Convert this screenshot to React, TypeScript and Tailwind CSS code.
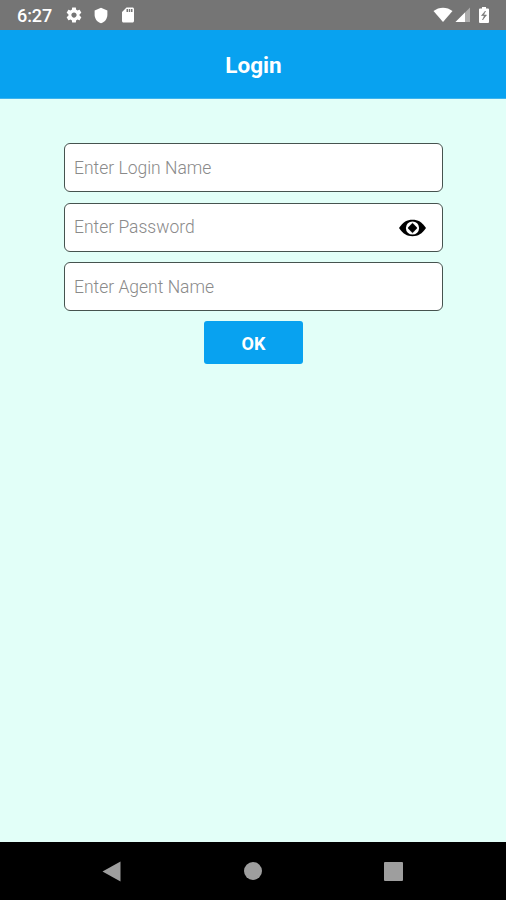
import type { ReactNode } from 'react';

function StatusBar() {
  return (
    <div className="flex h-[30px] shrink-0 items-center bg-[#757575] pl-[17px] pr-[16px] text-white">
      <span className="w-[48px] pt-[2px] text-[18px] font-medium leading-[28px] tracking-[-0.1px]">6:27</span>
      <svg className="h-[18px] w-[18px]" viewBox="0 0 24 24" fill="currentColor">
        <path d="M19.43 12.98c.04-.32.07-.64.07-.98s-.03-.66-.07-.98l2.11-1.65c.19-.15.24-.42.12-.64l-2-3.46c-.12-.22-.39-.3-.61-.22l-2.49 1c-.52-.4-1.08-.73-1.69-.98l-.38-2.65C14.46 2.18 14.25 2 14 2h-4c-.25 0-.46.18-.49.42l-.38 2.65c-.61.25-1.17.59-1.69.98l-2.49-1c-.23-.09-.49 0-.61.22l-2 3.46c-.13.22-.07.49.12.64l2.11 1.65c-.04.32-.07.65-.07.98s.03.66.07.98l-2.11 1.65c-.19.15-.24.42-.12.64l2 3.46c.12.22.39.3.61.22l2.49-1c.52.4 1.08.73 1.69.98l.38 2.65c.03.24.24.42.49.42h4c.25 0 .46-.18.49-.42l.38-2.65c.61-.25 1.17-.59 1.69-.98l2.49 1c.23.09.49 0 .61-.22l2-3.46c.12-.22.07-.49-.12-.64l-2.11-1.65zM12 15.500c-1.930 0-3.500-1.570-3.500-3.500s1.570-3.500 3.500-3.500 3.500 1.570 3.500 3.500-1.570 3.500-3.500 3.500z" />
      </svg>
      <svg className="ml-[9px] h-[17px] w-[18px]" viewBox="0 0 24 24" fill="currentColor">
        <path d="M12 1 3 5v6c0 5.55 3.84 10.74 9 12 5.16-1.26 9-6.45 9-12V5l-9-4z" />
      </svg>
      <svg className="ml-[9px] h-[18px] w-[18px]" viewBox="0 0 24 24" fill="currentColor">
        <path d="M18 2h-8L4.02 8 4 20c0 1.100.9 2 2 2h12c1.100 0 2-.9 2-2V4c0-1.100-.9-2-2-2zm-6 6h-2V4h2v4zm3 0h-2V4h2v4zm3 0h-2V4h2v4z" />
      </svg>
      <svg className="ml-auto h-[16px] w-[20px]" viewBox="0 0 20 16" fill="currentColor">
        <path d="M.5 4C6-.5 14-.5 19.500 4L10 15z" />
      </svg>
      <svg className="ml-[2px] h-[16px] w-[15px]" viewBox="0 0 15 16" fill="currentColor">
        <path d="M15 .5V15H.5z" opacity=".4" />
        <path d="M10 5.500V15H.5z" />
      </svg>
      <svg className="ml-[8px] h-[18px] w-[12px]" viewBox="0 0 12 18">
        <path d="M4 1h4v1.500h2a1 1 0 0 1 1 1V16a1 1 0 0 1-1 1H2a1 1 0 0 1-1-1V3.500a1 1 0 0 1 1-1h2z" fill="white" />
        <path d="M7.500 5 3.500 9.500h3L4.500 14 8.500 9h-3z" fill="#757575" stroke="#757575" strokeWidth=".6" />
      </svg>
    </div>
  );
}

function Field({ label, children }: { label: string; children?: ReactNode }) {
  return (
    <div className="flex h-[49px] w-full items-center rounded-[6px] border border-[#46534f] bg-white pl-[9px] pr-[16px] text-[17.5px] font-light text-[#8a8a8a]">
      <span className="flex-1 pt-[1px]">{label}</span>
      {children}
    </div>
  );
}

function EyeIcon() {
  return (
    <svg className="mt-[1px] h-[18px] w-[27px] shrink-0" viewBox="0 0 27 18">
      <path d="M0 9C4 3 8 .8 13.500.8S23 3 27 9C23 15 19 17.200 13.500 17.200S4 15 0 9z" fill="black" />
      <circle cx="13.500" cy="9" r="6.600" fill="white" />
      <path d="M13.500 4.300Q16 6.500 18 9Q16 11.500 13.500 13.700Q11 11.500 9 9Q11 6.500 13.500 4.300z" fill="black" stroke="black" strokeWidth=".6" strokeLinejoin="round" />
    </svg>
  );
}

export default function App() {
  return (
    <div className="flex h-[900px] w-[506px] flex-col overflow-hidden bg-[#e2fff8] font-[Roboto,sans-serif]">
      <StatusBar />
      <header className="flex h-[69px] shrink-0 items-center justify-center border-b border-[#3eb3ee] bg-[#08a2f0] pl-[1px] pt-[4px] text-[22.5px] font-bold text-white">
        Login
      </header>
      <main className="flex flex-1 flex-col items-center pl-[64px] pr-[63px] pt-[44px]">
        <div className="flex w-full flex-col gap-[10.5px]">
          <Field label="Enter Login Name" />
          <Field label="Enter Password">
            <EyeIcon />
          </Field>
          <Field label="Enter Agent Name" />
        </div>
        <button className="mt-[10px] h-[43px] w-[99px] rounded-[3px] bg-[#08a2f0] pt-[2px] text-[18px] font-bold text-white">OK</button>
      </main>
      <nav className="flex h-[58px] shrink-0 items-center justify-between bg-black pl-[102px] pr-[103px] text-[#9e9e9e]">
        <svg className="h-[21px] w-[20px]" viewBox="0 0 20 21" fill="currentColor">
          <path d="M18.500.5v20L.5 10.500z" />
        </svg>
        <span className="h-[18px] w-[18px] rounded-full bg-[#9e9e9e]" />
        <span className="h-[19px] w-[19px] rounded-[1px] bg-[#9e9e9e]" />
      </nav>
    </div>
  );
}
